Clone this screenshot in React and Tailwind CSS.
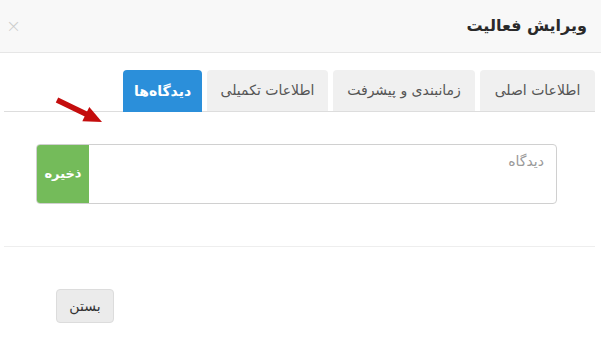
const tabs = [
  { label: 'اطلاعات اصلی', w: 'w-[115px]' },
  { label: 'زمانبندی و پیشرفت', w: 'w-[142px]' },
  { label: 'اطلاعات تکمیلی', w: 'w-[121px]' },
];

const App = () => {
  return (
    <div
      dir="rtl"
      className="relative w-[601px] h-[343px] bg-white overflow-hidden"
      style={{ fontFamily: '"DejaVu Sans", "Noto Sans", sans-serif' }}
    >
      {/* header */}
      <div className="h-[53px] bg-[#f8f8f8] border-b border-[#e6e6e6] flex items-center justify-between pr-[14px] pl-[6px]">
        <h1 className="text-[16px] font-bold text-[#2a2a2a]">ويرايش فعاليت</h1>
        <span className="text-[18px] leading-none font-light text-[#cccccc]">×</span>
      </div>

      {/* tabs */}
      <div className="mt-[17px] mr-[6px] ml-[4px] flex items-end gap-[5px] border-b border-[#dddddd]">
        {tabs.map((t) => (
          <div
            key={t.label}
            className={`${t.w} h-[41px] rounded-t-[4px] bg-[#f0f0f0] flex items-center justify-center text-[14px] text-[#555]`}
          >
            {t.label}
          </div>
        ))}
        <div className="w-[79px] h-[42px] -mb-px rounded-t-[4px] bg-[#2b8fda] flex items-center justify-center text-[14px] font-bold text-white">
          دیدگاه‌ها
        </div>
      </div>

      {/* comment input */}
      <div className="mt-[32px] mr-[44px] ml-[36px] h-[60px] flex border border-[#d0d0d0] rounded-[4px] overflow-hidden">
        <div className="flex-1 px-[12px] pt-[6px] text-[14px] text-[#999]">دیدگاه</div>
        <button className="w-[52px] bg-[#74bb5a] text-white text-[13px] font-bold">ذخیره</button>
      </div>

      <div className="mt-[42px] mr-[6px] ml-[4px] border-b border-[#eeeeee]" />

      {/* footer */}
      <div className="mt-[42px] flex justify-end pl-[56px]">
        <button className="w-[58px] h-[34px] rounded-[4px] bg-[#ebebeb] border border-[#dcdcdc] text-[14px] text-[#333]">
          بستن
        </button>
      </div>

      {/* red pointer arrow */}
      <svg className="absolute left-[50px] top-[94px]" width="60" height="34" viewBox="0 0 60 34">
        <path d="M7 6 L37 20.5" stroke="#c40d0d" strokeWidth="5.5" strokeLinecap="butt" />
        <polygon points="52,28 32.3,27.3 39.3,12.9" fill="#c40d0d" />
      </svg>
    </div>
  );
};

export default App;
